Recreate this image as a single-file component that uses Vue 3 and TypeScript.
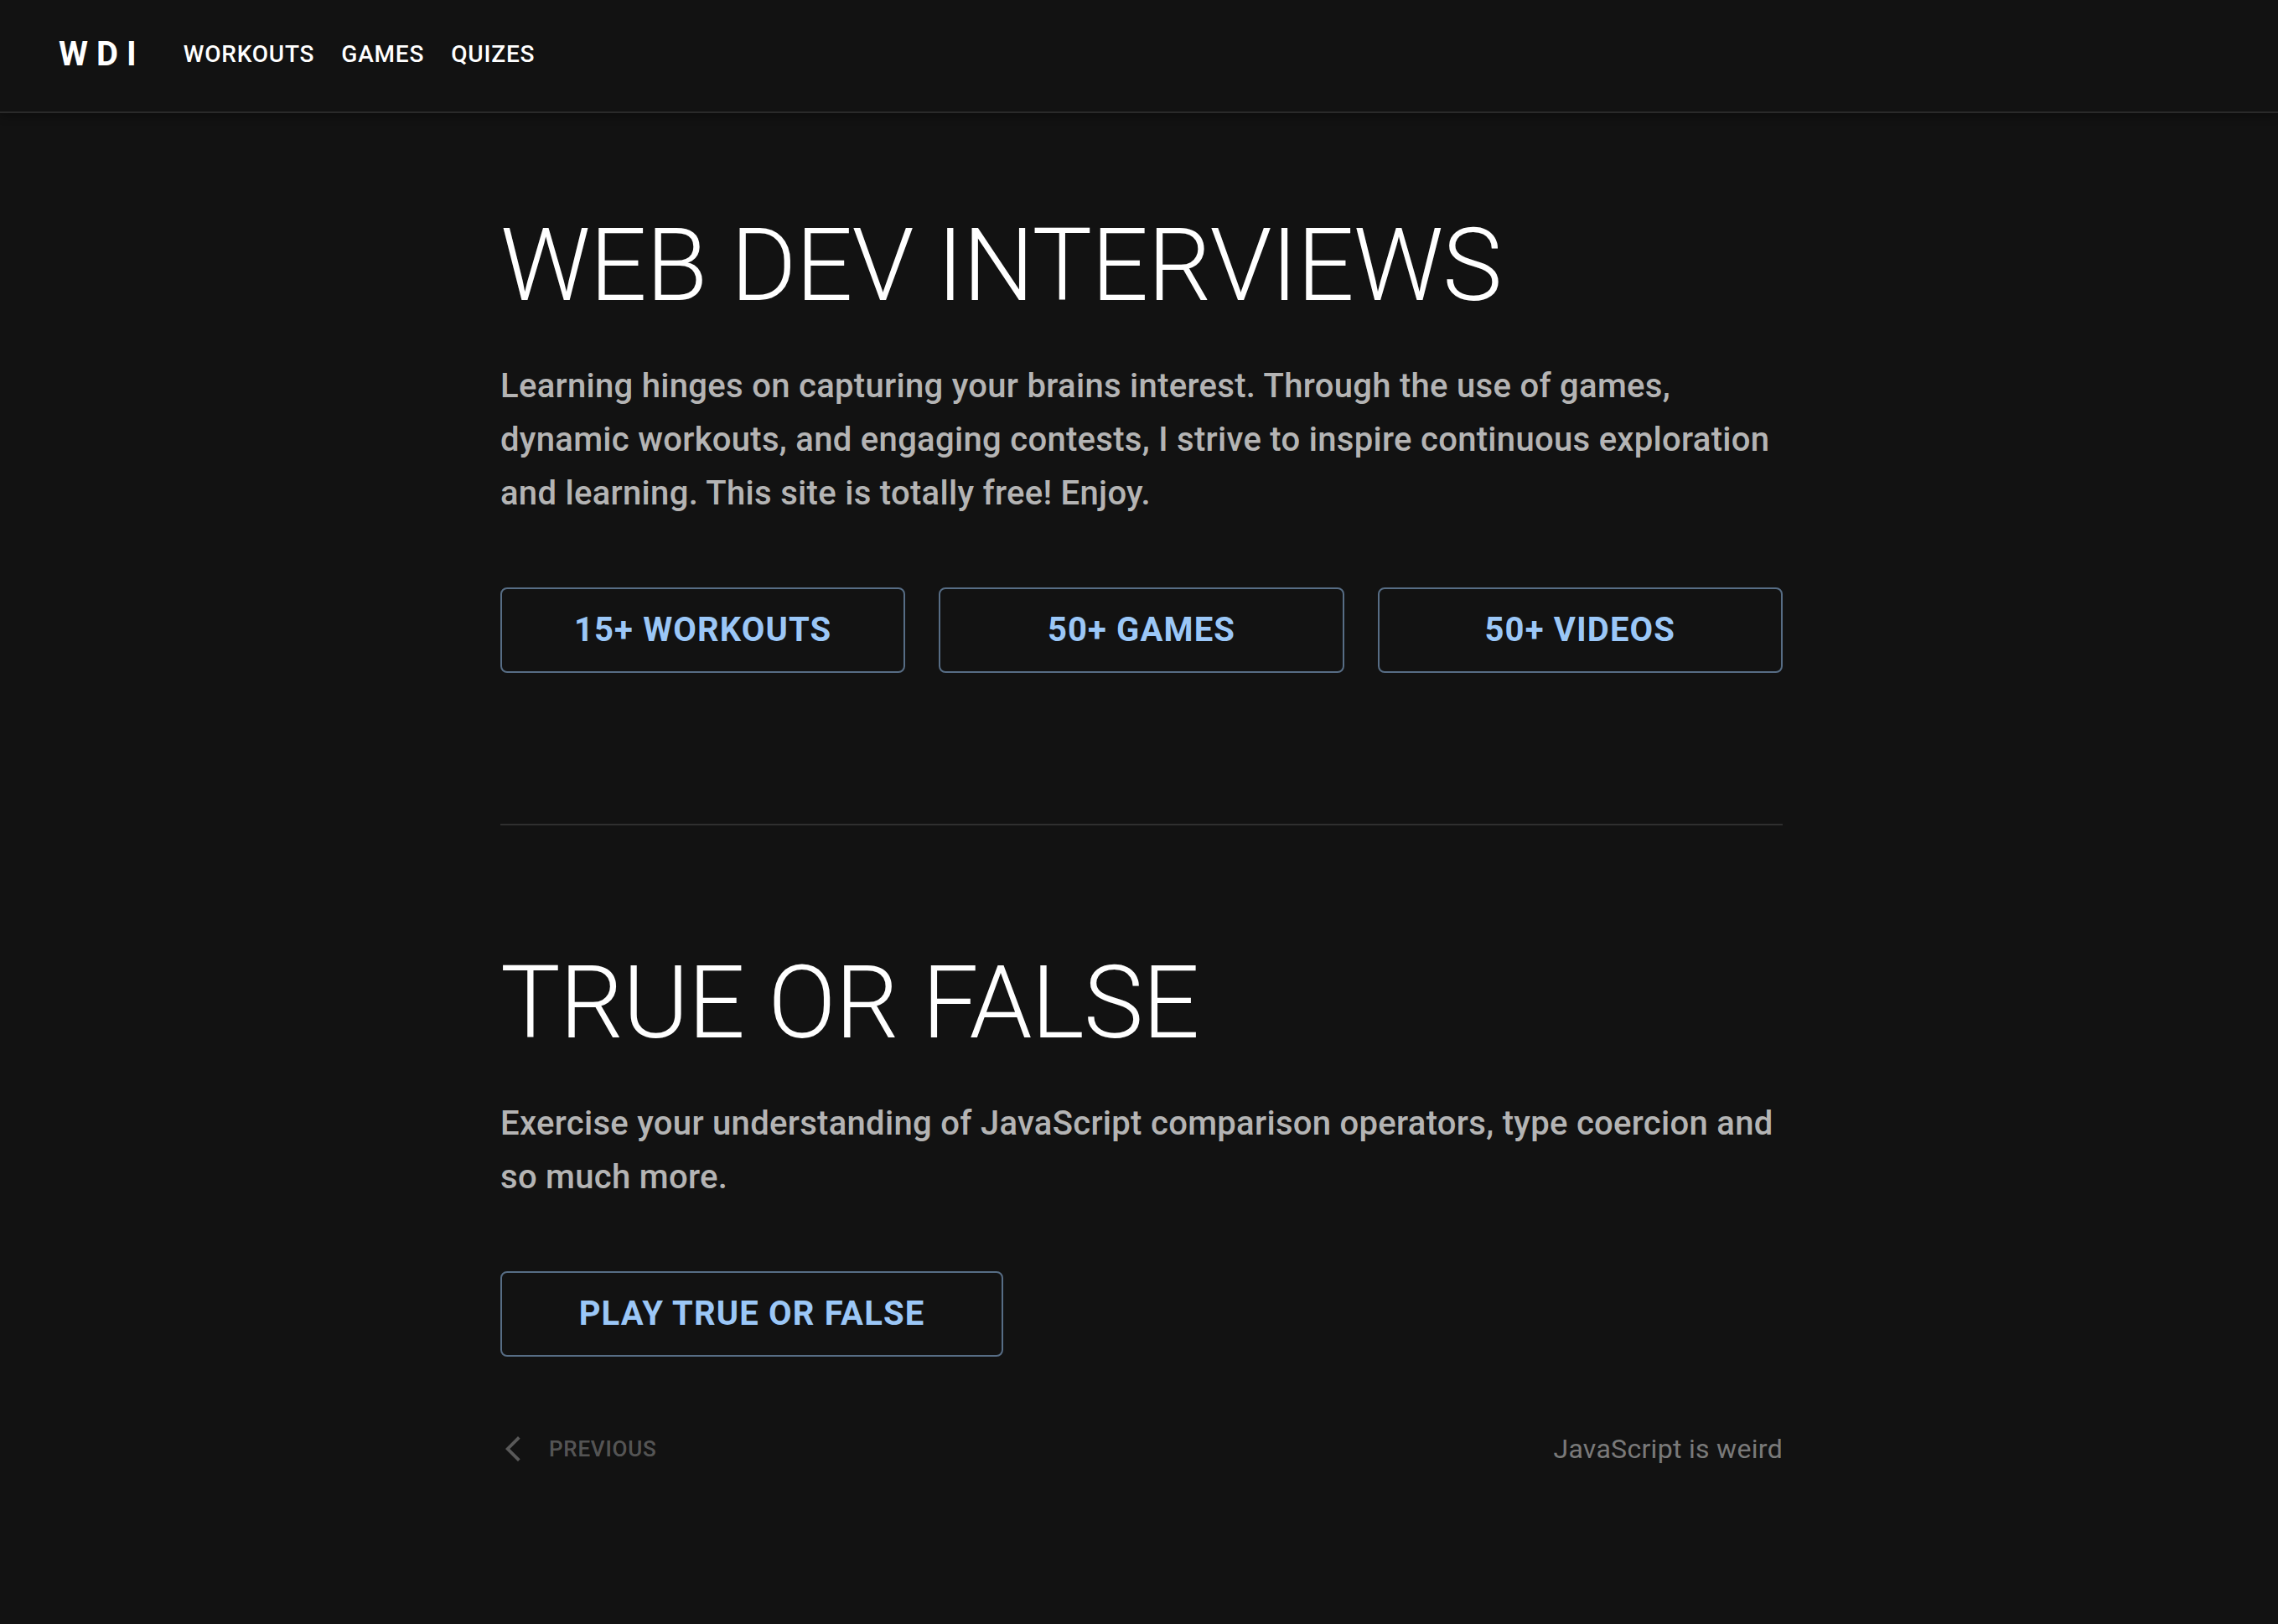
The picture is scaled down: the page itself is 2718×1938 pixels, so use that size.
<script setup lang="ts">
interface LinkItem {
  label: string
  href: string
}

const navLinks: LinkItem[] = [
  { label: 'Workouts', href: '#workouts' },
  { label: 'Games', href: '#games' },
  { label: 'Quizes', href: '#quizes' },
]

const stats: LinkItem[] = [
  { label: '15+ Workouts', href: '#workouts' },
  { label: '50+ Games', href: '#games' },
  { label: '50+ Videos', href: '#videos' },
]
</script>

<template>
  <div class="page">
    <header class="bar">
      <a class="logo" href="#home">WDI</a>
      <nav class="nav" aria-label="Main">
        <a v-for="link in navLinks" :key="link.label" class="nav-link" :href="link.href">{{ link.label }}</a>
      </nav>
    </header>

    <main class="content">
      <section>
        <h1 class="title">Web Dev Interviews</h1>
        <p class="lead">
          Learning hinges on capturing your brains interest. Through the use of games, dynamic
          workouts, and engaging contests, I strive to inspire continuous exploration and learning.
          This site is totally free! Enjoy.
        </p>
        <div class="stats">
          <a v-for="stat in stats" :key="stat.label" class="outlined" :href="stat.href">{{ stat.label }}</a>
        </div>
      </section>

      <hr class="divider" />

      <section>
        <h2 class="title">True or False</h2>
        <p class="lead">
          Exercise your understanding of JavaScript comparison operators, type coercion and so much
          more.
        </p>
        <button class="outlined play" type="button">Play True or False</button>
        <div class="pager">
          <button class="previous" type="button" disabled>
            <svg class="chevron" viewBox="6 2 12 20" aria-hidden="true">
              <path d="M17.77 3.77L16 2 6 12l10 10 1.77-1.77L9.54 12z" />
            </svg>
            Previous
          </button>
          <span class="caption">JavaScript is weird</span>
        </div>
      </section>
    </main>
  </div>
</template>

<style>
html,
body {
  background: #121212;
}
</style>

<style scoped>
.page {
  min-height: 100vh;
  background: #121212;
  color: #fff;
  font-family: Roboto, "Liberation Sans", sans-serif;
}

.bar {
  display: flex;
  align-items: center;
  gap: 46px;
  height: 130px;
  padding: 0 70px 3px;
  border-bottom: 2px solid #2a2a2a;
  box-shadow: 0 4px 10px rgba(0, 0, 0, 0.3);
}

.logo {
  color: #fff;
  font-size: 40px;
  font-weight: 700;
  line-height: 64px;
  letter-spacing: 10px;
  text-decoration: none;
}

.nav {
  display: flex;
  gap: 32px;
}

.nav-link {
  color: #fff;
  font-size: 28px;
  font-weight: 500;
  line-height: 48px;
  letter-spacing: 0.02857em;
  text-decoration: none;
  text-transform: uppercase;
}

.content {
  box-sizing: border-box;
  max-width: 1536px;
  margin: 0 auto;
  padding: 110px 0 160px 6px;
}

.title {
  margin: 0;
  font-size: 120px;
  font-weight: 300;
  line-height: 144px;
  letter-spacing: -0.00833em;
  text-transform: uppercase;
}

.lead {
  margin: 40px 0 80px;
  color: rgba(255, 255, 255, 0.7);
  font-size: 40px;
  font-weight: 500;
  line-height: 64px;
  letter-spacing: 0.0075em;
}

.stats {
  display: grid;
  grid-template-columns: repeat(3, 1fr);
  gap: 40px;
}

.outlined {
  display: block;
  box-sizing: border-box;
  padding: 17px 30px;
  border: 2px solid rgba(155, 199, 247, 0.5);
  border-radius: 8px;
  background: transparent;
  color: #9bc7f7;
  font-family: inherit;
  font-size: 40px;
  font-weight: 700;
  line-height: 64px;
  letter-spacing: 0.02857em;
  text-align: center;
  text-decoration: none;
  text-transform: uppercase;
}

.play {
  width: 600px;
}

.divider {
  height: 2px;
  margin: 180px 0 140px;
  border: 0;
  background: #2f2f2f;
}

.pager {
  display: flex;
  align-items: center;
  justify-content: space-between;
  margin-top: 80px;
}

.previous {
  display: flex;
  align-items: center;
  gap: 34px;
  padding: 0 6px;
  border: 0;
  background: transparent;
  color: rgba(255, 255, 255, 0.3);
  font-family: inherit;
  font-size: 26px;
  font-weight: 500;
  line-height: 60px;
  letter-spacing: 0.02857em;
  text-transform: uppercase;
}

.chevron {
  width: 18px;
  height: 30px;
  fill: currentColor;
}

.caption {
  color: rgba(255, 255, 255, 0.45);
  font-size: 32px;
  line-height: 60px;
  letter-spacing: 0.00938em;
}
</style>
